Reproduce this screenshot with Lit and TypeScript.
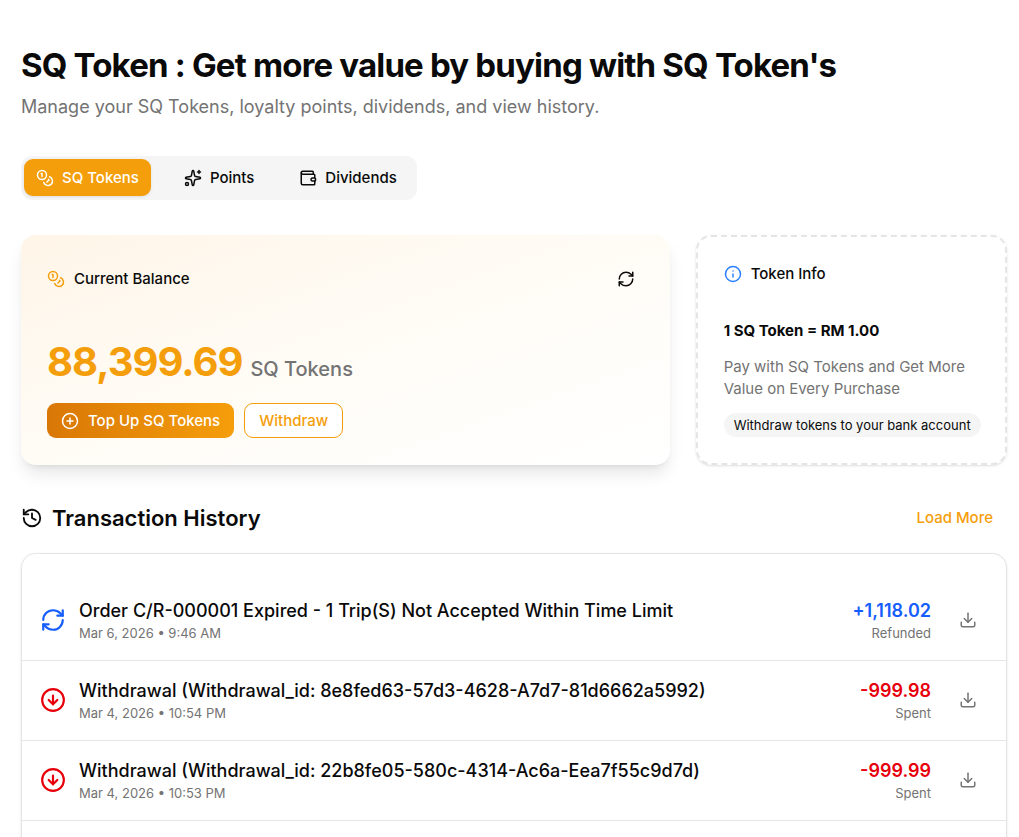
import { LitElement, html, css, svg } from "lit";
import { customElement, state } from "lit/decorators.js";
import { classMap } from "lit/directives/class-map.js";

const icons = {
  coins: svg`<circle cx="8" cy="8" r="6"/><path d="M18.09 10.37A6 6 0 1 1 10.34 18"/><path d="M7 6h1v4"/><path d="m16.71 13.88.7.71-2.82 2.82"/>`,
  sparkles: svg`<path d="M11.017 2.814a1 1 0 0 1 1.966 0l1.051 5.558a2 2 0 0 0 1.594 1.594l5.558 1.051a1 1 0 0 1 0 1.966l-5.558 1.051a2 2 0 0 0-1.594 1.594l-1.051 5.558a1 1 0 0 1-1.966 0l-1.051-5.558a2 2 0 0 0-1.594-1.594l-5.558-1.051a1 1 0 0 1 0-1.966l5.558-1.051a2 2 0 0 0 1.594-1.594z"/><path d="M20 2v4"/><path d="M22 4h-4"/><circle cx="4" cy="20" r="2"/>`,
  wallet: svg`<path d="M19 7V4a1 1 0 0 0-1-1H5a2 2 0 0 0 0 4h15a1 1 0 0 1 1 1v4h-3a2 2 0 0 0 0 4h3a1 1 0 0 0 1-1v-2a1 1 0 0 0-1-1"/><path d="M3 5v14a2 2 0 0 0 2 2h15a1 1 0 0 0 1-1v-4"/>`,
  refresh: svg`<path d="M3 12a9 9 0 0 1 9-9 9.75 9.75 0 0 1 6.74 2.74L21 8"/><path d="M21 3v5h-5"/><path d="M21 12a9 9 0 0 1-9 9 9.75 9.75 0 0 1-6.74-2.74L3 16"/><path d="M8 16H3v5"/>`,
  info: svg`<circle cx="12" cy="12" r="10"/><path d="M12 16v-4"/><path d="M12 8h.01"/>`,
  plus: svg`<circle cx="12" cy="12" r="10"/><path d="M8 12h8"/><path d="M12 8v8"/>`,
  history: svg`<path d="M3 12a9 9 0 1 0 9-9 9.75 9.75 0 0 0-6.74 2.74L3 8"/><path d="M3 3v5h5"/><path d="M12 7v5l4 2"/>`,
  down: svg`<circle cx="12" cy="12" r="10"/><path d="M12 8v8"/><path d="m8 12 4 4 4-4"/>`,
  download: svg`<path d="M12 15V3"/><path d="M21 15v4a2 2 0 0 1-2 2H5a2 2 0 0 1-2-2v-4"/><path d="m7 10 5 5 5-5"/>`,
};
type IconName = keyof typeof icons;

const icon = (name: IconName, size: number, cls = "") => html`<svg
  class="icon ${cls}" width=${size} height=${size} viewBox="0 0 24 24" fill="none"
  stroke="currentColor" stroke-width="2" stroke-linecap="round" stroke-linejoin="round"
  aria-hidden="true">${icons[name]}</svg>`;

const tabs: { label: string; icon: IconName }[] = [
  { label: "SQ Tokens", icon: "coins" },
  { label: "Points", icon: "sparkles" },
  { label: "Dividends", icon: "wallet" },
];

interface Transaction {
  title: string;
  date: string;
  amount: string;
  kind: "Refunded" | "Spent";
}

const transactions: Transaction[] = [
  { title: "Order C/R-000001 Expired - 1 Trip(S) Not Accepted Within Time Limit", date: "Mar 6, 2026 • 9:46 AM", amount: "+1,118.02", kind: "Refunded" },
  { title: "Withdrawal (Withdrawal_id: 8e8fed63-57d3-4628-A7d7-81d6662a5992)", date: "Mar 4, 2026 • 10:54 PM", amount: "-999.98", kind: "Spent" },
  { title: "Withdrawal (Withdrawal_id: 22b8fe05-580c-4314-Ac6a-Eea7f55c9d7d)", date: "Mar 4, 2026 • 10:53 PM", amount: "-999.99", kind: "Spent" },
];

@customElement("app-root")
export class AppRoot extends LitElement {
  @state() private activeTab = 0;

  static styles = css`
    :host {
      display: flex;
      flex-direction: column;
      box-sizing: border-box;
      height: 100vh;
      overflow: hidden;
      padding: 45px 12px 0 21px;
      background: #fff;
      color: #0a0a0a;
      font-family: Inter, "Liberation Sans", sans-serif;
      font-size: 15px;
      line-height: 22px;
    }
    *, *::before { box-sizing: border-box; }
    h1, h2, h3, p, ul { margin: 0; padding: 0; font-weight: inherit; font-size: inherit; }
    button { font: inherit; color: inherit; background: none; border: 0; padding: 0; cursor: pointer; }
    .icon { display: block; flex: none; }

    .title { font-size: 33px; line-height: 40px; font-weight: 700; letter-spacing: -0.025em; }
    .subtitle { margin-top: 9px; font-size: 18px; line-height: 26px; color: #737373; }

    .tabs {
      display: flex;
      align-self: flex-start;
      gap: 21px;
      height: 44px;
      margin-top: 36px;
      padding: 3px 8px 4px 3px;
      border-radius: 11px;
      background: #f5f5f5;
    }
    .tab {
      display: flex;
      align-items: center;
      gap: 8px;
      padding: 0 12px;
      border-radius: 9px;
      font-weight: 500;
    }
    .tab.active { background: #f59e0b; color: #fff; box-shadow: 0 1px 3px rgb(0 0 0 / 0.1); }

    .cards { display: grid; grid-template-columns: repeat(3, minmax(0, 1fr)); gap: 26px; margin-top: 35px; }
    .balance {
      grid-column: span 2;
      padding: 26px;
      border-radius: 15px;
      background: linear-gradient(to bottom right, #fff5e8, #fffcf6 50%, #fff);
      box-shadow: 0 11px 17px -3px rgb(0 0 0 / 0.1), 0 4px 7px -4px rgb(0 0 0 / 0.1);
    }
    .balance-head { display: flex; align-items: center; justify-content: space-between; }
    .label { display: flex; align-items: center; gap: 9px; font-weight: 500; }
    .amber { color: #f59e0b; }
    .blue { color: #2b7fff; }
    .icon-button { display: grid; place-items: center; width: 36px; height: 36px; border-radius: 7px; }
    .sum { display: flex; align-items: baseline; gap: 8px; margin-top: 44px; }
    .sum-value { font-size: 40px; line-height: 42px; font-weight: 700; letter-spacing: -0.025em; color: #f59e0b; }
    .sum-unit { font-size: 20px; line-height: 20px; font-weight: 500; color: #737373; }
    .actions { display: flex; gap: 10px; margin-top: 20px; }
    .action {
      display: flex;
      align-items: center;
      gap: 9px;
      height: 35px;
      padding: 0 14px;
      border-radius: 9px;
      font-weight: 500;
    }
    .action.primary { color: #fff; background: linear-gradient(to right, #d97706, #f59e0b); }
    .action.outline { color: #f59e0b; background: #fff; border: 1px solid #f59e0b; }

    .info {
      padding: 26px;
      border: 2px dashed #e5e5e5;
      border-radius: 15px;
      box-shadow: 0 1px 3px rgb(0 0 0 / 0.1), 0 1px 2px -1px rgb(0 0 0 / 0.1);
    }
    .rate { margin-top: 35px; font-weight: 700; }
    .info-text { margin-top: 14px; color: #737373; }
    .badge {
      width: max-content;
      margin-top: 13px;
      padding: 3px 10px;
      border-radius: 12px;
      background: #f5f5f5;
      font-size: 13px;
      line-height: 18px;
      white-space: nowrap;
    }

    .history-head { display: flex; align-items: center; justify-content: space-between; margin-top: 35px; height: 35px; }
    .history-title { display: flex; align-items: center; gap: 9px; font-size: 22px; line-height: 30px; font-weight: 600; }
    .load { height: 35px; padding: 0 14px; border-radius: 9px; font-weight: 500; color: #f59e0b; }

    .list {
      flex: 1;
      margin-top: 18px;
      padding-top: 27px;
      border: 1px solid #e5e5e5;
      border-bottom: 0;
      border-radius: 15px 15px 0 0;
      list-style: none;
      box-shadow: 0 1px 3px rgb(0 0 0 / 0.1);
    }
    .row { display: flex; align-items: center; gap: 13px; padding: 17px 18px 18px; border-bottom: 1px solid #e5e5e5; }
    .row-main { flex: 1; min-width: 0; }
    .row-title { font-size: 18px; line-height: 26px; font-weight: 500; }
    .row-note { font-size: 13px; line-height: 18px; color: #737373; }
    .row-side { text-align: right; }
    .row-amount { font-size: 18px; line-height: 26px; font-weight: 600; }
    .refunded { color: #155dfc; }
    .spent { color: #e7000b; }
    .download { width: 40px; margin-left: 4px; color: #737373; }
  `;

  render() {
    return html`
      <h1 class="title">SQ Token : Get more value by buying with SQ Token's</h1>
      <p class="subtitle">Manage your SQ Tokens, loyalty points, dividends, and view history.</p>

      <div class="tabs" role="tablist">
        ${tabs.map((t, i) => html`
          <button
            role="tab"
            class=${classMap({ tab: true, active: i === this.activeTab })}
            aria-selected=${i === this.activeTab ? "true" : "false"}
            @click=${() => (this.activeTab = i)}
          >${icon(t.icon, 18)}${t.label}</button>`)}
      </div>

      <section class="cards">
        <div class="balance">
          <div class="balance-head">
            <h2 class="label">${icon("coins", 18, "amber")}Current Balance</h2>
            <button class="icon-button" aria-label="Refresh balance">${icon("refresh", 18)}</button>
          </div>
          <p class="sum"><span class="sum-value">88,399.69</span><span class="sum-unit">SQ Tokens</span></p>
          <div class="actions">
            <button class="action primary">${icon("plus", 18)}Top Up SQ Tokens</button>
            <button class="action outline">Withdraw</button>
          </div>
        </div>

        <aside class="info">
          <h2 class="label">${icon("info", 18, "blue")}Token Info</h2>
          <p class="rate">1 SQ Token = RM 1.00</p>
          <p class="info-text">Pay with SQ Tokens and Get More Value on Every Purchase</p>
          <p class="badge">Withdraw tokens to your bank account</p>
        </aside>
      </section>

      <div class="history-head">
        <h2 class="history-title">${icon("history", 22)}Transaction History</h2>
        <button class="load">Load More</button>
      </div>
      <ul class="list">
        ${transactions.map((t) => {
          const tone = t.kind === "Refunded" ? "refunded" : "spent";
          return html`
            <li class="row">
              ${icon(t.kind === "Refunded" ? "refresh" : "down", 26, tone)}
              <div class="row-main">
                <h3 class="row-title">${t.title}</h3>
                <p class="row-note">${t.date}</p>
              </div>
              <div class="row-side">
                <p class="row-amount ${tone}">${t.amount}</p>
                <p class="row-note">${t.kind}</p>
              </div>
              <button class="icon-button download" aria-label="Download receipt">${icon("download", 18)}</button>
            </li>`;
        })}
      </ul>
    `;
  }
}
